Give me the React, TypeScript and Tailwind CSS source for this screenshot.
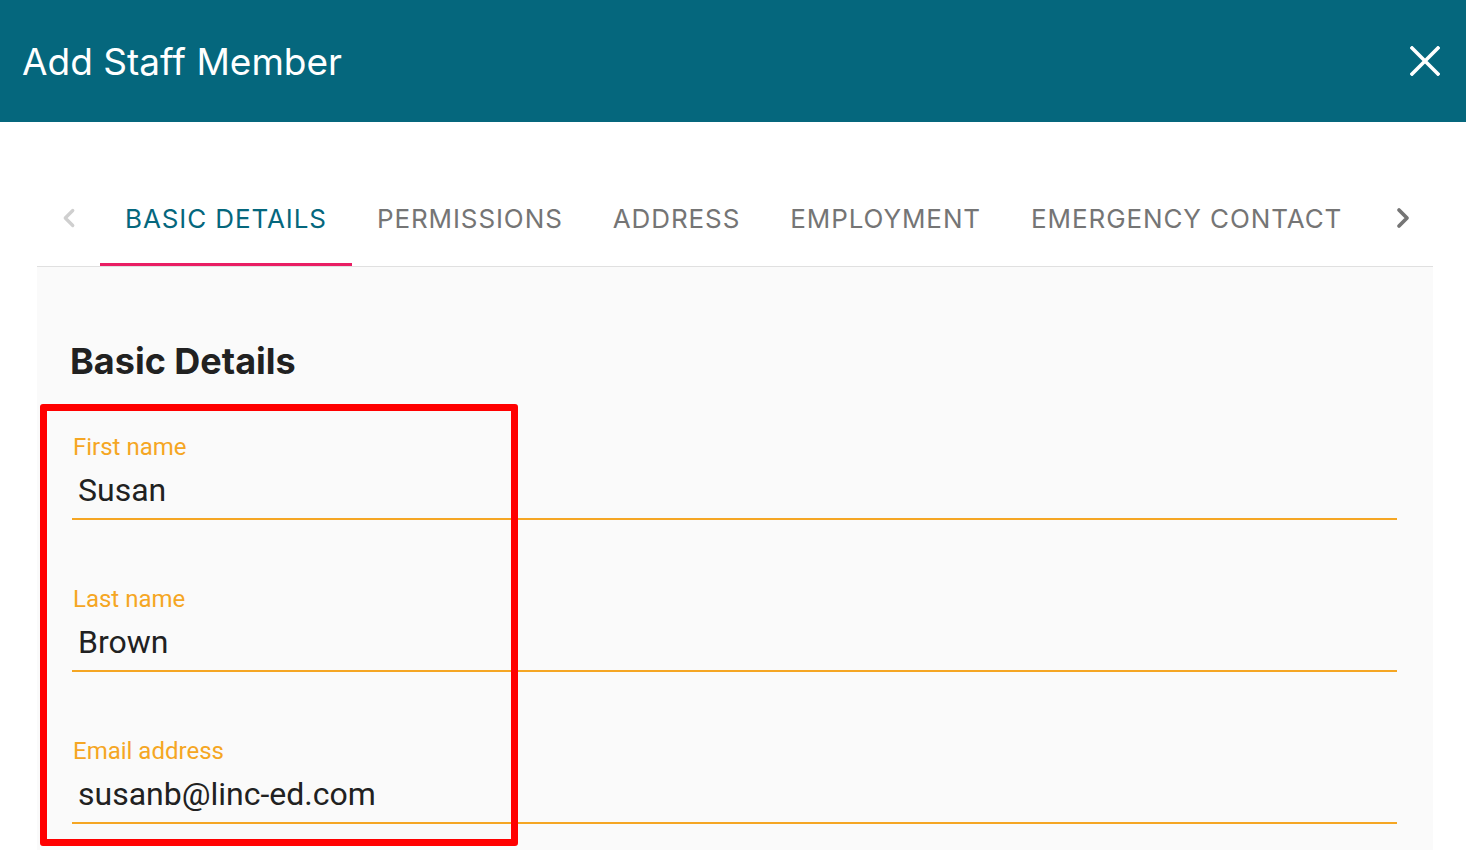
import { ChevronLeft, ChevronRight } from "lucide-react";

const tabs = ["Basic Details", "Permissions", "Address", "Employment", "Emergency Contact"];

const fields = [
  { label: "First name", value: "Susan" },
  { label: "Last name", value: "Brown" },
  { label: "Email address", value: "susanb@linc-ed.com" },
];

export default function App() {
  return (
    <div
      className="relative w-[1466px] h-[850px] overflow-hidden bg-white"
      style={{ fontFamily: "Roboto, 'Noto Sans', sans-serif" }}
    >
      {/* Header */}
      <div className="h-[122px] bg-[#05677d] flex items-center justify-between pl-[22px] pr-[26px]">
        <h1 className="font-['Inter',sans-serif] text-[37px] leading-none text-white font-normal">Add Staff Member</h1>
        <svg width="30" height="30" viewBox="0 0 30 30" className="text-white">
          <path d="M2 2 L28 28 M28 2 L2 28" stroke="currentColor" strokeWidth="3.6" strokeLinecap="square" />
        </svg>
      </div>

      {/* Tabs + panel */}
      <div className="mt-[48px] ml-[37px] mr-[33px]">
        <div className="h-[96px] flex items-stretch font-['Inter',sans-serif]">
          <div className="w-[63px] flex items-center justify-center text-[#cfcfcf]">
            <ChevronLeft size={30} strokeWidth={2.6} />
          </div>
          <div className="flex-1 flex">
            {tabs.map((t, i) => (
              <div
                key={t}
                className={
                  "relative px-[25px] flex items-center text-[26px] tracking-[0.9px] uppercase " +
                  (i === 0 ? "text-[#05677d]" : "text-[#757575]")
                }
              >
                {t}
                {i === 0 && <div className="absolute left-0 right-0 bottom-0 h-[3px] bg-[#e91e63]" />}
              </div>
            ))}
          </div>
          <div className="w-[60px] flex items-center justify-center text-[#757575]">
            <ChevronRight size={32} strokeWidth={2.8} />
          </div>
        </div>

        <div className="border-t border-[#e0e0e0] bg-[#fafafa] h-[600px] pt-[73px] pl-[33px]">
          <h2 className="font-['Inter',sans-serif] text-[36px] leading-[43px] font-bold text-[#212121]">Basic Details</h2>
          <div className="mt-[50px] ml-[2px] w-[1325px] flex flex-col gap-[65px]">
            {fields.map((f) => (
              <div key={f.label} className="border-b-2 border-[#f5a623] pb-[9px]">
                <div className="pl-[1px] text-[24px] leading-[28px] text-[#f5a623]">{f.label}</div>
                <div className="mt-[10px] pl-[6px] text-[32px] leading-[38px] text-[#212121]">{f.value}</div>
              </div>
            ))}
          </div>
        </div>
      </div>

      {/* Annotation box */}
      <div className="absolute left-[40px] top-[404px] w-[478px] h-[442px] border-[7px] border-[#ff0000] rounded-[3px]" />
    </div>
  );
}
